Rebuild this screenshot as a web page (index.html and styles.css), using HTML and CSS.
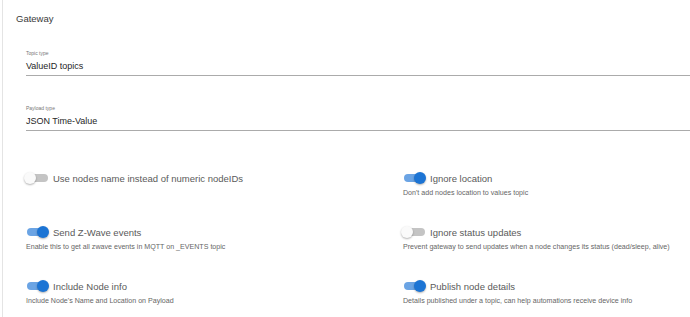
FILE: index.html
```html
<!DOCTYPE html>
<html lang="en">
<head>
  <meta charset="UTF-8">
  <title>Gateway settings</title>
  <link rel="stylesheet" href="styles.css">
</head>
<body>

  <div class="card">
    <div class="card-title">Gateway</div>

    <div class="fields">
      <div class="field">
        <div class="field-label">Topic type</div>
        <div class="field-value">ValueID topics</div>
      </div>
      <div class="field">
        <div class="field-label">Payload type</div>
        <div class="field-value">JSON Time-Value</div>
      </div>

      <div class="switch-grid">
        <div class="switch-item">
          <label class="switch">
            <span class="toggle"><span class="track"></span><span class="thumb"></span></span>
            Use nodes name instead of numeric nodeIDs
          </label>
        </div>
        <div class="switch-item">
          <label class="switch on">
            <span class="toggle"><span class="track"></span><span class="thumb"></span></span>
            Ignore location
          </label>
          <div class="hint">Don't add nodes location to values topic</div>
        </div>

        <div class="switch-item">
          <label class="switch on">
            <span class="toggle"><span class="track"></span><span class="thumb"></span></span>
            Send Z-Wave events
          </label>
          <div class="hint">Enable this to get all zwave events in MQTT on _EVENTS topic</div>
        </div>
        <div class="switch-item">
          <label class="switch">
            <span class="toggle"><span class="track"></span><span class="thumb"></span></span>
            Ignore status updates
          </label>
          <div class="hint">Prevent gateway to send updates when a node changes its status (dead/sleep, alive)</div>
        </div>

        <div class="switch-item">
          <label class="switch on">
            <span class="toggle"><span class="track"></span><span class="thumb"></span></span>
            Include Node info
          </label>
          <div class="hint">Include Node's Name and Location on Payload</div>
        </div>
        <div class="switch-item">
          <label class="switch on">
            <span class="toggle"><span class="track"></span><span class="thumb"></span></span>
            Publish node details
          </label>
          <div class="hint">Details published under a topic, can help automations receive device info</div>
        </div>
      </div>
    </div>
  </div>

</body>
</html>
```

FILE: styles.css
```css
* {
  box-sizing: border-box;
  margin: 0;
  padding: 0;
}

html,
body {
  height: 100%;
}

body {
  background: #fff;
  font-family: 'Liberation Sans', Arial, sans-serif;
  color: #333;
  overflow: hidden;
}

.card {
  margin-left: 2px;
  min-height: 100%;
  border-left: 1px solid #e4e4e4;
  padding: 12px 0 0 13px;
}

.card-title {
  font-size: 9.5px;
  line-height: 14px;
  color: #3a3a3a;
}

.fields {
  margin-left: 10px;
  margin-top: 23px;
}

.field {
  border-bottom: 1px solid #ababab;
  padding-bottom: 3px;
  margin-bottom: 28px;
}

.field-label {
  font-size: 5px;
  line-height: 8px;
  color: #777;
}

.field-value {
  margin-top: 3px;
  font-size: 9px;
  line-height: 12px;
  color: #262626;
}

.switch-grid {
  display: grid;
  grid-template-columns: 377px 1fr;
  row-gap: 26px;
  margin-top: 39px;
}

.switch-item {
  min-height: 28px;
}

.switch {
  display: flex;
  align-items: center;
  gap: 3px;
  height: 16px;
  font-size: 9.5px;
  color: #5a5a5a;
  margin-left: -2px;
}

.toggle {
  position: relative;
  width: 26px;
  height: 16px;
  flex: none;
}

.track {
  position: absolute;
  left: 3px;
  right: 2px;
  top: 4px;
  height: 8px;
  border-radius: 4px;
  background: #c4c4c4;
}

.thumb {
  position: absolute;
  top: 2px;
  left: 0;
  width: 12px;
  height: 12px;
  border-radius: 50%;
  background: #fafafa;
  box-shadow: 0 1px 2px rgba(0, 0, 0, 0.3);
}

.switch.on .track {
  background: #6ba4e4;
}

.switch.on .thumb {
  left: 13px;
  background: #1c74d4;
}

.hint {
  margin-top: 3px;
  font-size: 7.1px;
  line-height: 9px;
  color: #666;
}
```
